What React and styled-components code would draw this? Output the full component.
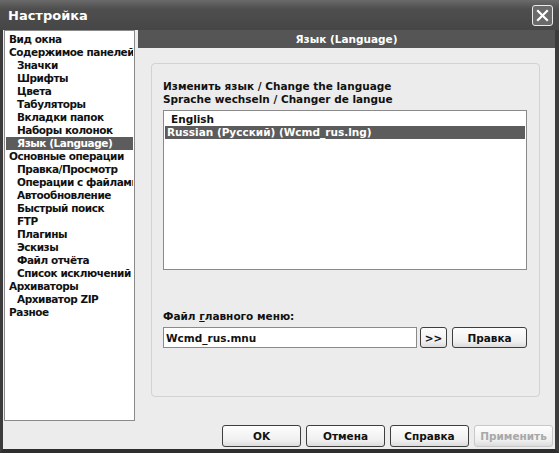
import React from 'react';
import styled, { createGlobalStyle } from 'styled-components';

const GlobalStyle = createGlobalStyle`
  html, body { margin: 0; padding: 0; background: #ececec; }
  * { box-sizing: border-box; }
`;

const Window = styled.div`
  width: 559px;
  height: 453px;
  background: #ececec;
  border-left: 3px solid #3c3c3c;
  border-right: 4px solid #3c3c3c;
  border-bottom: 4px solid #2e2e2e;
  display: flex;
  flex-direction: column;
  font-family: Tahoma, "DejaVu Sans", "Liberation Sans", sans-serif;
  font-weight: bold;
  font-size: 10.5px;
  color: #111;
`;

const TitleBar = styled.div`
  height: 30px;
  margin-left: -3px;
  margin-right: -4px;
  padding: 0 6px 0 8px;
  background: linear-gradient(#6a6a6a, #4e4e4e 30%, #464646);
  display: flex;
  align-items: center;
  justify-content: space-between;
  color: #fff;
  font-size: 13px;
`;

const CloseBtn = styled.div`
  width: 21px;
  height: 21px;
  border: 1px solid #eaeaea;
  border-radius: 3px;
  background: #6a6a6a;
  display: flex;
  align-items: center;
  justify-content: center;
`;

const Main = styled.div`
  display: flex;
  flex: 1;
  min-height: 0;
`;

const Tree = styled.div`
  width: 133px;
  height: 391px;
  margin-left: 1px;
  background: #fff;
  border: 1px solid #8a8a8a;
  padding: 2px 1px;
  overflow: hidden;
  letter-spacing: -0.45px;
`;

const TreeItem = styled.div`
  height: 13px;
  line-height: 13px;
  padding-left: ${p => (p.$sub ? 10 : 2)}px;
  white-space: nowrap;
  overflow: hidden;
  background: ${p => (p.$selected ? '#5c5c5c' : 'transparent')};
  color: ${p => (p.$selected ? '#fff' : '#111')};
`;

const ItemLabel = styled.span`
  padding-left: 1px;
`;

const RightPane = styled.div`
  flex: 1;
  display: flex;
  flex-direction: column;
  margin-left: 3px;
`;

const Header = styled.div`
  height: 19px;
  background: #555;
  border-bottom: 1px solid #efefef;
  color: #fff;
  display: flex;
  align-items: center;
  justify-content: center;
`;

const Group = styled.div`
  margin: 14px 15px 0 13px;
  height: 334px;
  border: 1px solid #d2d2d2;
  border-radius: 4px;
  padding: 16px 12px 0 11px;
  display: flex;
  flex-direction: column;
`;

const Caption = styled.div`
  line-height: 13px;
`;

const ListBox = styled.div`
  margin-top: 4px;
  height: 160px;
  background: #fff;
  border: 1px solid #8a8a8a;
  padding: 2px 1px;
`;

const ListItem = styled.div`
  height: 13px;
  line-height: 13px;
  padding-left: ${p => (p.$selected ? 2 : 6)}px;
  background: ${p => (p.$selected ? '#5c5c5c' : 'transparent')};
  color: ${p => (p.$selected ? '#fff' : '#111')};
`;

const FieldLabel = styled.div`
  margin-top: 40px;
  line-height: 13px;
`;

const Underline = styled.span`
  text-decoration: underline;
`;

const FieldRow = styled.div`
  display: flex;
  align-items: center;
  margin-top: 4px;
  gap: 3px;
`;

const TextInput = styled.div`
  width: 254px;
  height: 21px;
  background: #fff;
  border: 1px solid #8a8a8a;
  padding-left: 2px;
  display: flex;
  align-items: center;
`;

const Button = styled.div`
  width: ${p => p.$w}px;
  height: ${p => p.$h || 21}px;
  margin-left: ${p => p.$ml || 0}px;
  border: 1px solid #3e3e3e;
  border-radius: 3px;
  background: linear-gradient(#fdfdfd, #f0f0f0 70%, #dcdcdc);
  display: flex;
  align-items: center;
  justify-content: center;
  color: ${p => (p.$disabled ? '#a8a8a8' : '#111')};
  border-color: ${p => (p.$disabled ? '#c8c8c8' : '#3e3e3e')};
`;

const Footer = styled.div`
  display: flex;
  justify-content: flex-end;
  gap: 5px;
  padding: 0 2px 0 0;
  height: 24px;
  align-items: flex-start;
`;

const items = [
  ['Вид окна'],
  ['Содержимое панелей'],
  ['Значки', 1],
  ['Шрифты', 1],
  ['Цвета', 1],
  ['Табуляторы', 1],
  ['Вкладки папок', 1],
  ['Наборы колонок', 1],
  ['Язык (Language)', 1, 1],
  ['Основные операции'],
  ['Правка/Просмотр', 1],
  ['Операции с файлами', 1],
  ['Автообновление', 1],
  ['Быстрый поиск', 1],
  ['FTP', 1],
  ['Плагины', 1],
  ['Эскизы', 1],
  ['Файл отчёта', 1],
  ['Список исключений', 1],
  ['Архиваторы'],
  ['Архиватор ZIP', 1],
  ['Разное'],
];

const App = () => {
  return (
    <>
      <GlobalStyle />
      <Window>
        <TitleBar>
          <span>Настройка</span>
          <CloseBtn>
            <svg width="13" height="13" viewBox="0 0 13 13">
              <path d="M2 2 L11 11 M11 2 L2 11" stroke="#fff" strokeWidth="2.2" strokeLinecap="square" />
            </svg>
          </CloseBtn>
        </TitleBar>
        <Main>
          <Tree>
            {items.map(([label, sub, sel]) => (
              <TreeItem key={label} $sub={sub} $selected={sel}>
                <ItemLabel>{label}</ItemLabel>
              </TreeItem>
            ))}
          </Tree>
          <RightPane>
            <Header>Язык (Language)</Header>
            <Group>
              <Caption>Изменить язык / Change the language</Caption>
              <Caption>Sprache wechseln / Changer de langue</Caption>
              <ListBox>
                <ListItem>English</ListItem>
                <ListItem $selected>Russian (Русский) (Wcmd_rus.lng)</ListItem>
              </ListBox>
              <FieldLabel>
                Файл <Underline>г</Underline>лавного меню:
              </FieldLabel>
              <FieldRow>
                <TextInput>Wcmd_rus.mnu</TextInput>
                <Button $w={27}>&gt;&gt;</Button>
                <Button $w={75} $ml={2}>Правка</Button>
              </FieldRow>
            </Group>
          </RightPane>
        </Main>
        <Footer>
          <Button $w={79} $h={22}>OK</Button>
          <Button $w={79} $h={22}>Отмена</Button>
          <Button $w={79} $h={22}>Справка</Button>
          <Button $w={79} $h={22} $disabled>Применить</Button>
        </Footer>
      </Window>
    </>
  );
};

export default App;
